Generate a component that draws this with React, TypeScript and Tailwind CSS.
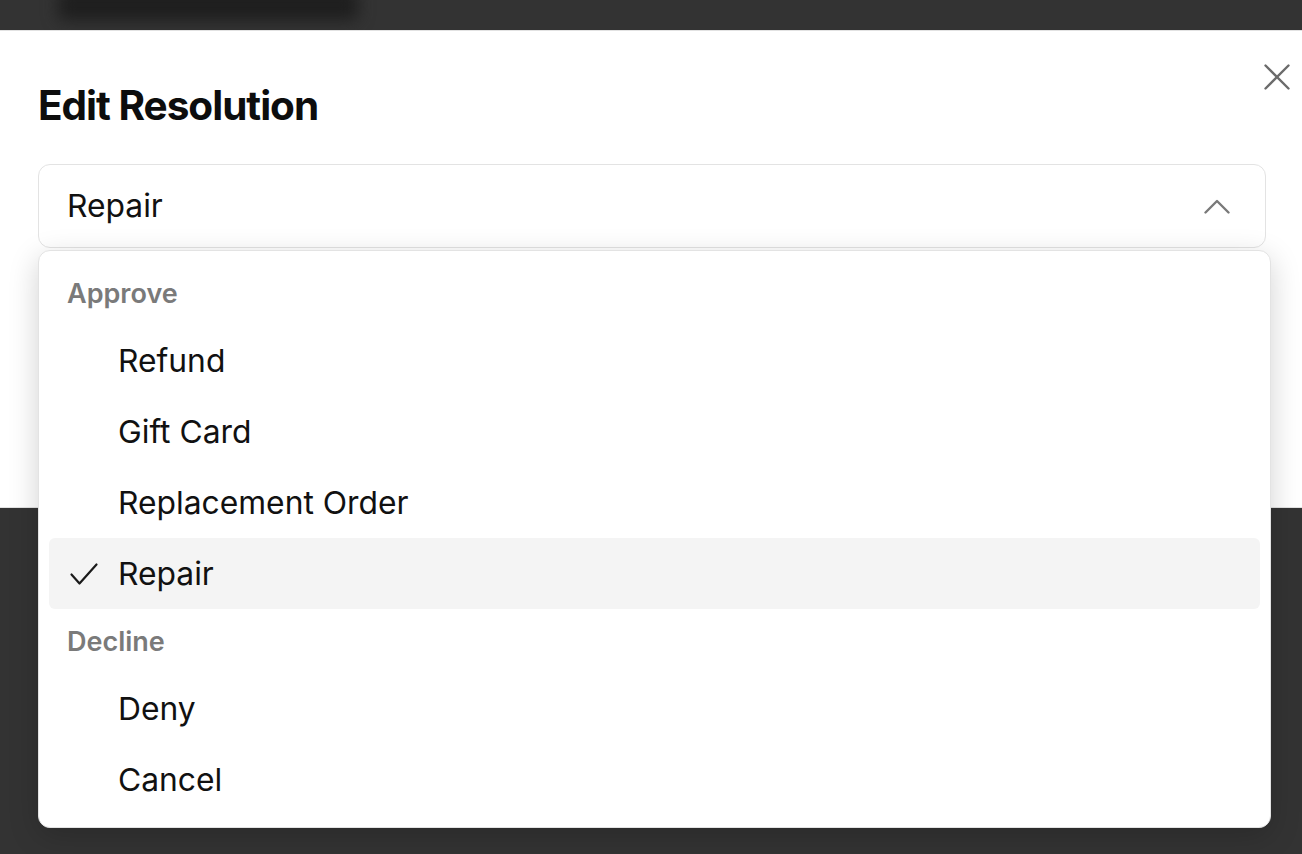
import React from "react";

const font = { fontFamily: "Inter, 'Noto Sans', 'Liberation Sans', sans-serif" };

function Check() {
  return (
    <svg width="28" height="24" viewBox="0 0 28 24" fill="none" className="shrink-0">
      <polyline points="1.5,12.5 9.5,21.5 26.5,2.5" stroke="#1a1a1a" strokeWidth="2.2" strokeLinecap="round" strokeLinejoin="round" />
    </svg>
  );
}

function Item({ label, selected }: { label: string; selected?: boolean }) {
  return (
    <div
      className={
        "flex h-[71px] items-center rounded-[6px] " + (selected ? "bg-[#f4f4f4]" : "")
      }
    >
      <div className="flex w-[69px] shrink-0 items-center pl-[21px]">{selected ? <Check /> : null}</div>
      <span className="text-[31.8px] leading-none text-[#111]">{label}</span>
    </div>
  );
}

function GroupLabel({ label }: { label: string }) {
  return (
    <div className="flex h-[64px] items-center pl-[18px] text-[27px] font-semibold leading-none text-[#7a7a7a]">
      {label}
    </div>
  );
}

export default function App() {
  return (
    <div className="relative h-[854px] w-[1302px] overflow-hidden bg-[#333333]" style={font}>
      <div className="h-[30px] overflow-hidden px-[58px]">
        <div className="-mt-[10px] h-[30px] w-[300px] rounded-[6px] bg-[#1e1e1e] blur-[8px]" />
      </div>
      <div className="relative h-[478px] border-y border-[#e2e2e2] bg-white px-[38px] pt-[50px]">
        <button className="absolute right-[12px] top-[33px] p-0">
          <svg width="26" height="26" viewBox="0 0 26 26" fill="none">
            <path d="M1.5 1.5 L24.5 24.5 M24.5 1.5 L1.5 24.5" stroke="#6b6b6b" strokeWidth="2.4" strokeLinecap="round" />
          </svg>
        </button>
        <h2 className="text-[40.5px] font-bold leading-[50px] tracking-[-0.025em] text-[#0d0d0d]">Edit Resolution</h2>
        <div className="mt-[33px] flex h-[84px] w-[1228px] items-center justify-between rounded-[12px] border border-[#e3e3e3] bg-white pl-[28px] pr-[35px]">
          <span className="text-[31.8px] leading-none text-[#111]">Repair</span>
          <svg width="26" height="15" viewBox="0 0 26 15" fill="none">
            <polyline points="1.5,13.5 13,2 24.5,13.5" stroke="#7a7a7a" strokeWidth="2.4" strokeLinecap="round" strokeLinejoin="round" />
          </svg>
        </div>
        <div className="mt-[46px] h-[68px] w-[1228px] rounded-[10px] border border-[#a9c0dc]" />
      </div>
      <div className="absolute left-[38px] top-[250px] w-[1233px] rounded-[12px] border border-[#e3e3e3] bg-white px-[10px] pb-[12px] pt-[10px] shadow-[0_8px_30px_rgba(0,0,0,0.18)]">
        <GroupLabel label="Approve" />
        <Item label="Refund" />
        <Item label="Gift Card" />
        <Item label="Replacement Order" />
        <Item label="Repair" selected />
        <GroupLabel label="Decline" />
        <Item label="Deny" />
        <Item label="Cancel" />
      </div>
    </div>
  );
}
